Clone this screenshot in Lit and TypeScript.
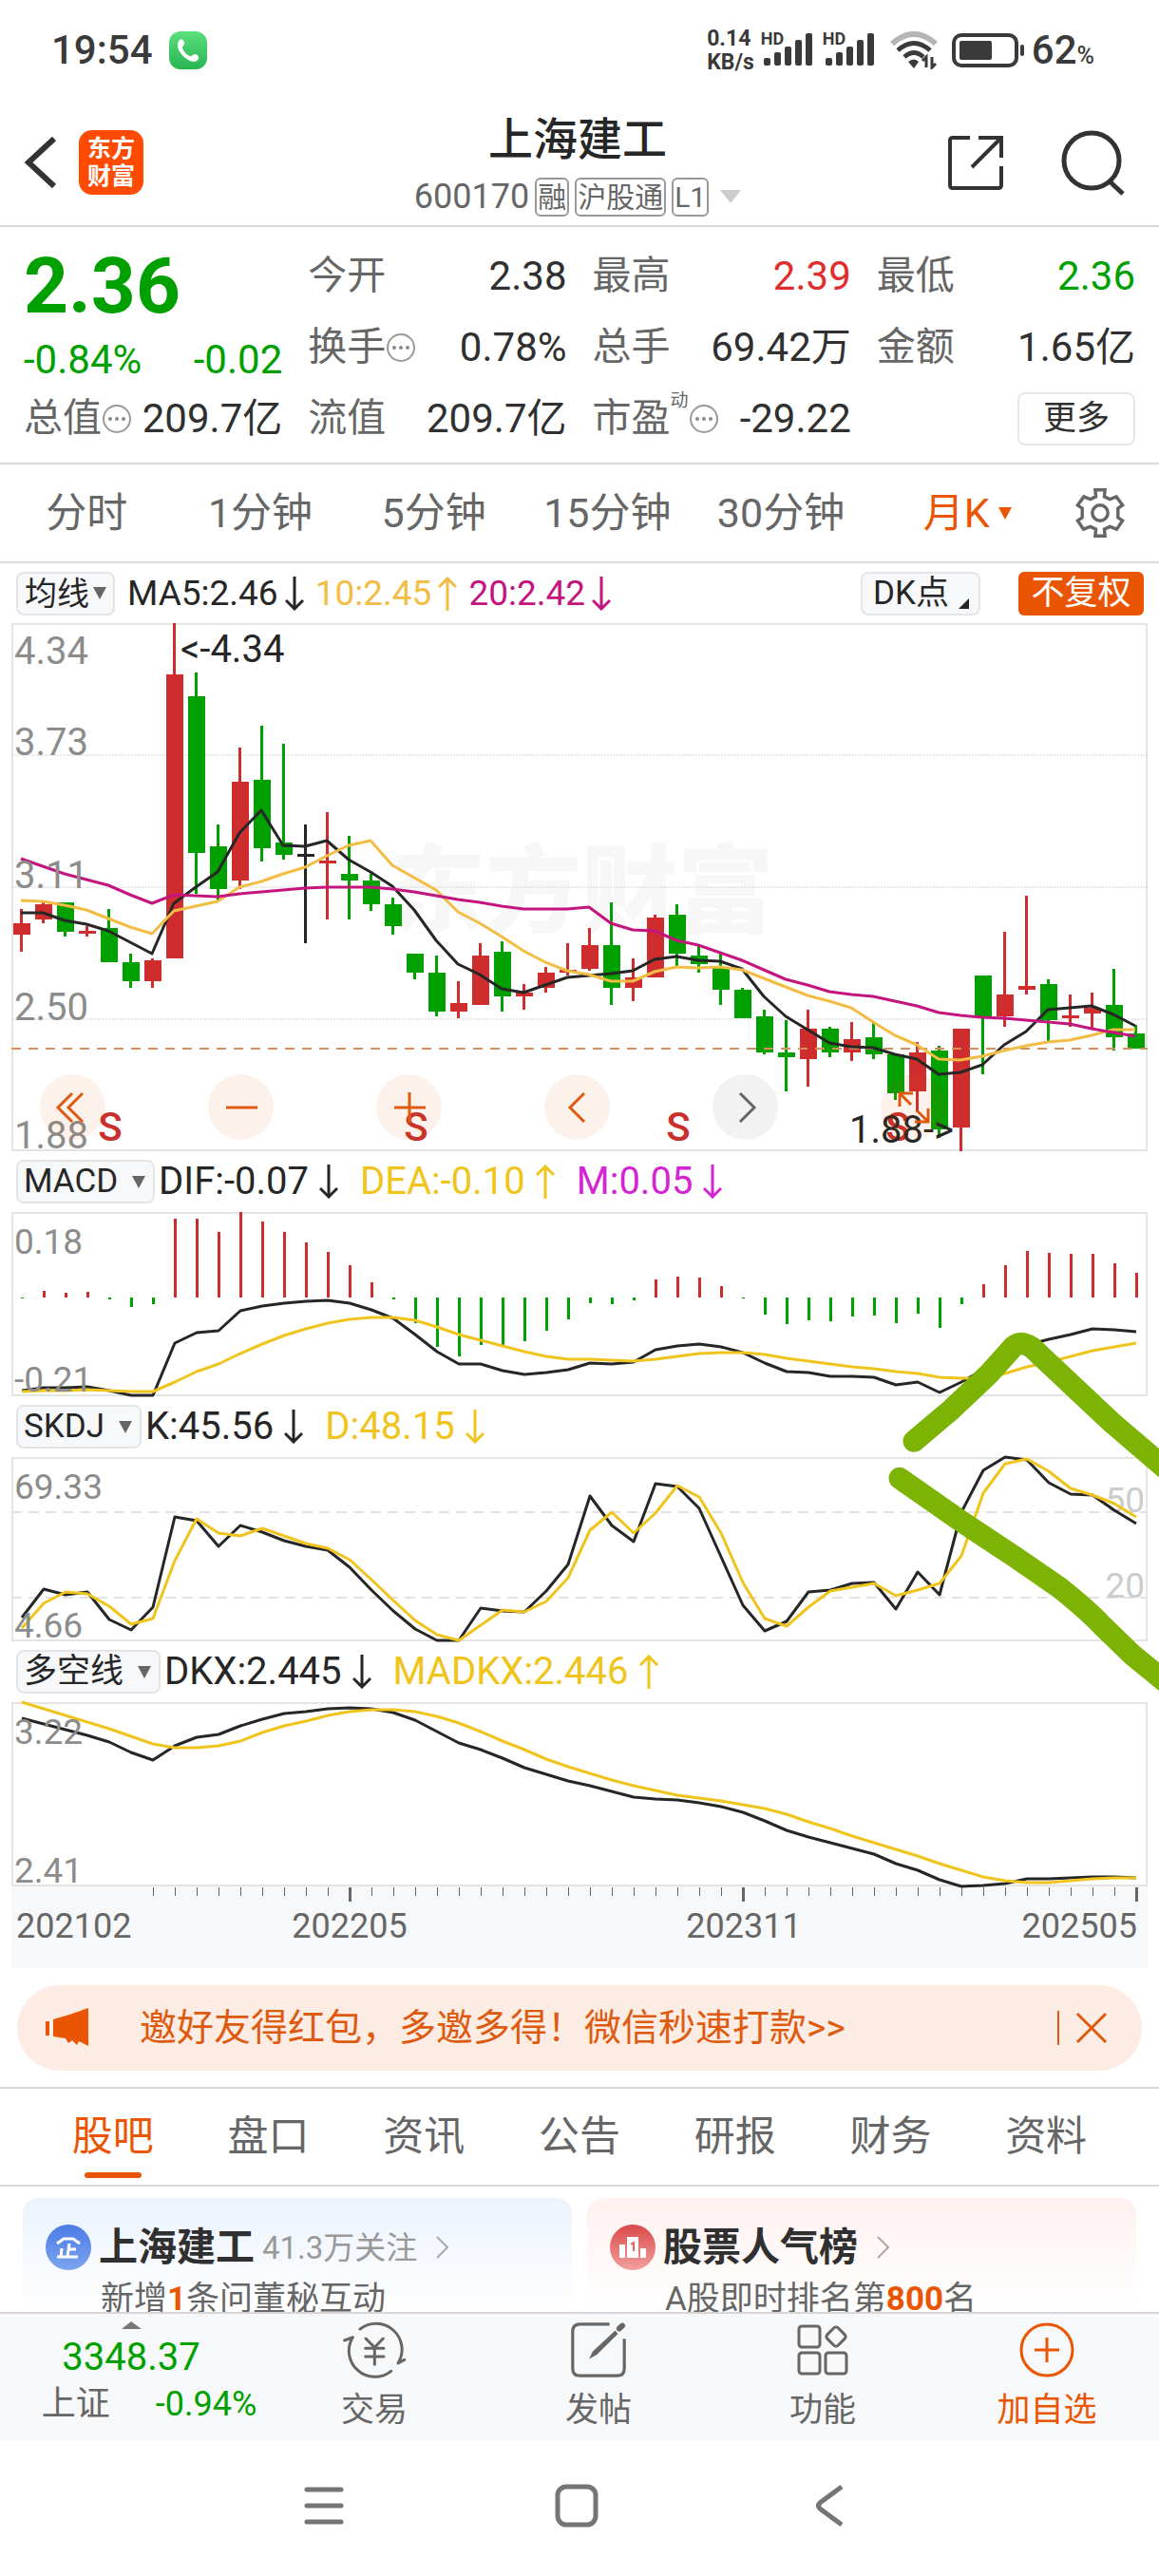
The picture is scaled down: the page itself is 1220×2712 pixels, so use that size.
import { LitElement, html, svg, css } from "lit";
import { customElement, property } from "lit/decorators.js";
import { classMap } from "lit/directives/class-map.js";

type Tone = "up" | "down" | "flat";
/** Monthly bar in fen: open-side top, high, body bottom, low. */
type Candle = [tone: Tone, high: number, top: number, bottom: number, low: number];

const CANDLES: Candle[] = [
  ["up", 301, 294, 289, 281], ["up", 304, 303, 296, 294], ["down", 304, 304, 290, 288],
  ["up", 293, 290, 290, 288], ["down", 301, 292, 276, 276], ["down", 280, 276, 267, 264],
  ["up", 278, 277, 267, 264], ["up", 434, 410, 278, 278], ["down", 411, 400, 327, 308],
  ["down", 340, 330, 310, 305], ["up", 376, 360, 314, 310], ["down", 386, 361, 329, 323],
  ["down", 378, 332, 326, 324], ["flat", 340, 326, 326, 285], ["up", 346, 323, 323, 296],
  ["down", 335, 317, 314, 296], ["down", 317, 314, 303, 300], ["down", 306, 303, 293, 289],
  ["down", 280, 280, 271, 268], ["down", 279, 271, 253, 251], ["up", 267, 257, 253, 250],
  ["up", 285, 279, 256, 256], ["down", 286, 281, 260, 253], ["up", 266, 262, 260, 254],
  ["up", 274, 271, 264, 262], ["up", 285, 272, 272, 270], ["up", 292, 284, 273, 272],
  ["down", 304, 284, 264, 256], ["up", 278, 269, 264, 258], ["up", 298, 297, 269, 269],
  ["down", 303, 298, 280, 274], ["down", 284, 279, 275, 271], ["down", 280, 274, 263, 256],
  ["down", 264, 263, 250, 250], ["down", 254, 251, 234, 233], ["down", 249, 234, 232, 216],
  ["up", 254, 245, 231, 218], ["down", 246, 245, 234, 232], ["up", 248, 240, 234, 230],
  ["down", 248, 241, 233, 231], ["down", 233, 233, 215, 212], ["up", 239, 234, 216, 206],
  ["down", 237, 235, 198, 194], ["up", 245, 245, 199, 188], ["down", 270, 270, 251, 224],
  ["up", 290, 261, 251, 246], ["up", 307, 265, 263, 261], ["down", 268, 266, 249, 239],
  ["up", 261, 251, 251, 246], ["up", 262, 255, 252, 245], ["down", 273, 256, 241, 235],
  ["down", 247, 243, 236, 236],
];

interface Line { color: string; points: number[]; }
/** Sampling range that a panel's series are recorded in. */
interface Range { top: number; bottom: number; }

const PRICE_RANGE: Range = { top: 42, bottom: 1520 };
const PRICE_LINES: Line[] = [
  { color: "#262626", points: [852, 853, 873, 886, 904, 936, 966, 825, 780, 739, 630, 566, 665, 666, 650, 705, 738, 778, 845, 930, 996, 1026, 1065, 1075, 1054, 1034, 1027, 1022, 1015, 984, 975, 986, 989, 1010, 1087, 1143, 1180, 1216, 1227, 1229, 1249, 1262, 1305, 1300, 1278, 1222, 1185, 1125, 1118, 1112, 1137, 1170] },
  { color: "#f3bd45", points: [818, 821, 831, 845, 868, 893, 910, 848, 834, 821, 782, 765, 744, 724, 694, 665, 651, 720, 755, 790, 851, 881, 920, 958, 990, 1016, 1026, 1043, 1044, 1018, 1004, 1007, 1005, 1013, 1036, 1060, 1083, 1101, 1119, 1159, 1197, 1222, 1261, 1264, 1254, 1237, 1224, 1215, 1209, 1195, 1180, 1179] },
  { color: "#c4157f", points: [700, 722, 744, 759, 777, 801, 825, 802, 806, 808, 800, 794, 788, 784, 782, 781, 781, 785, 793, 804, 816, 824, 833, 841, 843, 841, 838, 883, 900, 903, 929, 944, 964, 987, 1013, 1038, 1055, 1073, 1082, 1088, 1101, 1114, 1133, 1139, 1144, 1148, 1154, 1159, 1164, 1176, 1188, 1199] },
];

const MACD_RANGE: Range = { top: 185, bottom: 727 };
const MACD_ZERO = 437;
const MACD_BARS = [440, 417, 423, 420, 441, 464, 456, 204, 204, 244, 185, 213, 244, 274, 302, 342, 392, 441, 512, 582, 610, 577, 578, 566, 535, 501, 454, 457, 444, 384, 375, 378, 403, 440, 487, 515, 504, 507, 493, 490, 512, 484, 526, 456, 398, 342, 300, 305, 308, 308, 336, 364];
const MACD_LINES: Line[] = [
  { color: "#262626", points: [711, 703, 702, 699, 710, 725, 723, 571, 541, 534, 476, 462, 453, 448, 445, 454, 473, 497, 545, 597, 632, 632, 652, 664, 657, 649, 629, 632, 627, 591, 579, 574, 583, 599, 630, 654, 657, 668, 668, 672, 694, 686, 716, 685, 650, 612, 575, 560, 545, 528, 532, 538] },
  { color: "#efc41c", points: [714, 711, 709, 708, 709, 712, 714, 686, 655, 632, 602, 574, 548, 530, 513, 501, 495, 495, 504, 524, 546, 563, 579, 596, 610, 618, 619, 621, 624, 617, 610, 602, 599, 599, 604, 615, 624, 632, 639, 647, 655, 661, 671, 674, 673, 660, 641, 627, 609, 594, 582, 571] },
];

const SKDJ_RANGE: Range = { top: 907, bottom: 1450 };
const SKDJ_LINES: Line[] = [
  { color: "#262626", points: [1380, 1297, 1314, 1305, 1385, 1416, 1349, 1083, 1094, 1169, 1109, 1128, 1153, 1170, 1181, 1233, 1300, 1360, 1414, 1446, 1447, 1353, 1361, 1363, 1302, 1224, 1023, 1108, 1155, 986, 993, 1057, 1200, 1345, 1418, 1390, 1305, 1299, 1280, 1276, 1354, 1247, 1314, 1070, 946, 908, 916, 983, 1016, 1020, 1063, 1104] },
  { color: "#efc41c", points: [1410, 1338, 1305, 1309, 1347, 1399, 1383, 1213, 1089, 1131, 1139, 1117, 1139, 1162, 1177, 1208, 1267, 1330, 1389, 1431, 1446, 1402, 1358, 1362, 1332, 1263, 1122, 1068, 1132, 1071, 992, 1025, 1130, 1277, 1384, 1404, 1348, 1302, 1291, 1280, 1315, 1299, 1280, 1199, 1014, 927, 912, 949, 999, 1020, 1043, 1082] },
];

const DKX_RANGE: Range = { top: 186, bottom: 768 };
const DKX_LINES: Line[] = [
  { color: "#262626", points: [237, 255, 272, 290, 313, 344, 369, 325, 297, 287, 261, 240, 222, 216, 207, 204, 206, 218, 244, 280, 315, 336, 363, 393, 414, 435, 450, 468, 486, 491, 495, 505, 516, 533, 562, 592, 612, 630, 648, 666, 695, 717, 747, 767, 764, 760, 744, 744, 741, 738, 737, 740] },
  { color: "#efc41c", points: [187, 208, 229, 250, 271, 295, 317, 329, 330, 324, 309, 283, 261, 246, 228, 216, 210, 209, 216, 231, 251, 279, 309, 336, 366, 390, 412, 433, 450, 465, 480, 489, 497, 509, 521, 540, 563, 585, 609, 631, 652, 673, 697, 718, 739, 751, 757, 757, 751, 745, 741, 741] },
];

const WIDTH = 1196;
const STEP = 23;
const TONES: Record<Tone, string> = { up: "#cf2d2d", down: "#00a000", flat: "#262626" };

const scaleY = (range: Range, height: number) => (value: number) =>
  Math.round(((value - range.top) / (range.bottom - range.top)) * height);

const drawLines = (lines: Line[], range: Range, height: number, startX: number) => {
  const y = scaleY(range, height);
  return lines.map(
    (line) => svg`<polyline fill="none" stroke=${line.color} stroke-width="3" stroke-linejoin="round"
      points=${line.points.map((p, i) => `${startX + i * STEP},${y(p)}`).join(" ")}></polyline>`,
  );
};

const frame = (height: number) =>
  svg`<rect x="1" y="1" width=${WIDTH - 2} height=${height - 2} fill="none" stroke="#e4e4e4" stroke-width="2"></rect>`;

const chartText = css`
  :host { display: block; }
  svg { display: block; width: 100%; height: auto; overflow: visible; }
  text { font-family: Roboto, "Noto Sans CJK SC", sans-serif; }
  .scale { font-size: 40px; fill: #8c8c8c; }
  .scale-small { font-size: 37px; fill: #8c8c8c; }
  .level { font-size: 37px; fill: #cccccc; }
  .mark { font-size: 40px; fill: #262626; }
  .signal { font-size: 42px; font-weight: 500; fill: #c9302c; }
  .watermark { font-size: 101px; font-weight: 900; fill: #f7f7f7; }
  .date { font-size: 36px; fill: #666666; }
`;

@customElement("price-chart")
class PriceChart extends LitElement {
  static styles = chartText;

  render() {
    const height = 556;
    const y = (fen: number) => Math.round(((434 - fen) / 246) * height);
    return html`<svg viewBox="0 0 ${WIDTH} ${height}" role="img" aria-label="月K线图">
      <text class="watermark" x="398" y="318">东方财富</text>
      ${frame(height)}
      ${[139, 278, 417].map((gy) => svg`<line x1="0" x2=${WIDTH} y1=${gy} y2=${gy} stroke="#d4d4d4" stroke-width="1" stroke-dasharray="2 1"></line>`)}
      ${CANDLES.map(([tone, high, top, bottom, low], i) => {
        const x = 2 + i * STEP;
        const body = Math.max(3, y(bottom) - y(top));
        return svg`<g fill=${TONES[tone]}>
          <rect x=${x + 7} y=${y(high)} width="3" height=${y(low) - y(high)}></rect>
          <rect x=${x} y=${y(top) - (top === bottom ? 1 : 0)} width="18" height=${body}></rect>
        </g>`;
      })}
      <line x1="0" x2=${WIDTH} y1="448" y2="448" stroke="#d0905f" stroke-width="2" stroke-dasharray="10 8"></line>
      ${drawLines(PRICE_LINES, PRICE_RANGE, height, 10)}
      <text class="scale" x="3" y="43">4.34</text>
      <text class="scale" x="3" y="139">3.73</text>
      <text class="scale" x="3" y="279">3.11</text>
      <text class="scale" x="3" y="418">2.50</text>
      <text class="scale" x="3" y="553">1.88</text>
      <text class="mark" x="178" y="41">&lt;-4.34</text>
      ${[104, 426, 702, 933].map((x) => svg`<text class="signal" text-anchor="middle" x=${x} y="545">S</text>`)}
      <text class="mark" text-anchor="end" x="992" y="547">1.88-&gt;</text>
    </svg>`;
  }
}

@customElement("indicator-chart")
class IndicatorChart extends LitElement {
  static styles = chartText;
  @property() kind: "macd" | "skdj" | "dkx" = "macd";

  private content(height: number) {
    if (this.kind === "macd") {
      const y = scaleY(MACD_RANGE, height);
      const zero = y(MACD_ZERO);
      return svg`
        ${MACD_BARS.map((v, i) => {
          const end = y(v);
          return svg`<rect x=${10 + i * STEP} y=${Math.min(zero, end)} width="3" height=${Math.max(1, Math.abs(end - zero))}
            fill=${v < MACD_ZERO ? TONES.up : TONES.down}></rect>`;
        })}
        ${drawLines(MACD_LINES, MACD_RANGE, height, 11)}
        <text class="scale-small" x="3" y="44">0.18</text>
        <text class="scale-small" x="3" y="189">-0.21</text>`;
    }
    if (this.kind === "skdj") {
      return svg`
        ${[58, 148].map((gy) => svg`<line x1="0" x2=${WIDTH} y1=${gy} y2=${gy} stroke="#e2e2e2" stroke-width="2" stroke-dasharray="11 7"></line>`)}
        <text class="level" text-anchor="end" x="1193" y="58">50</text>
        <text class="level" text-anchor="end" x="1193" y="148">20</text>
        ${drawLines(SKDJ_LINES, SKDJ_RANGE, height, 11)}
        <text class="scale-small" x="3" y="44">69.33</text>
        <text class="scale-small" x="3" y="190">4.66</text>`;
    }
    return svg`
      ${drawLines(DKX_LINES, DKX_RANGE, height, 11)}
      <text class="scale-small" x="3" y="44">3.22</text>
      <text class="scale-small" x="3" y="190">2.41</text>`;
  }

  render() {
    const height = 194;
    return html`<svg viewBox="0 0 ${WIDTH} ${height}" role="img" aria-label=${this.kind}>
      ${frame(height)}${this.content(height)}
    </svg>`;
  }
}

@customElement("time-axis")
class TimeAxis extends LitElement {
  static styles = [chartText, css`:host { background: #f7f8fa; }`];

  render() {
    return html`<svg viewBox="0 0 ${WIDTH} 86" role="img" aria-label="日期">
      ${Array.from({ length: 46 }, (_, n) => {
        const i = n + 6;
        const major = i === 15 || i === 33 || i === 51;
        return svg`<rect x=${major ? 10 + i * STEP : 11 + i * STEP} y="1" width=${major ? 3 : 1} height=${major ? 15 : 9} fill="#666666"></rect>`;
      })}
      <text class="date" x="5" y="54">202102</text>
      <text class="date" x="356" y="54" text-anchor="middle">202205</text>
      <text class="date" x="771" y="54" text-anchor="middle">202311</text>
      <text class="date" x="1185" y="54" text-anchor="end">202505</text>
    </svg>`;
  }
}

interface Reading { text: string; dir: "up" | "down"; color: string; }

const arrow = (dir: "up" | "down") =>
  html`<svg class="arrow" viewBox="0 0 20 36" aria-hidden="true">
    <path d=${dir === "down" ? "M10 0V34M1 25L10 34L19 25" : "M10 36V2M1 11L10 2L19 11"} fill="none" stroke="currentColor" stroke-width="3"></path>
  </svg>`;

const caret = html`<svg class="caret" viewBox="0 0 14 13" preserveAspectRatio="none" aria-hidden="true"><path d="M0 0H14L7 13Z" fill="currentColor"></path></svg>`;

const dots = html`<svg class="dots" viewBox="0 0 32 32" aria-hidden="true">
  <circle cx="16" cy="16" r="14" fill="none" stroke="#999" stroke-width="2"></circle>
  <g fill="#888"><circle cx="9" cy="16" r="2"></circle><circle cx="16" cy="16" r="2"></circle><circle cx="23" cy="16" r="2"></circle></g>
</svg>`;

const chevron = html`<svg class="chevron" viewBox="0 0 14 24" aria-hidden="true"><path d="M1 1L12 12L1 23" fill="none" stroke="#aaa" stroke-width="2"></path></svg>`;

const signal = html`<span class="signal-block"><svg viewBox="0 0 56 38" class="signal" aria-hidden="true">
  <g fill="#3a3a3a"><rect x="3" y="27" width="7" height="8" rx="2"></rect><rect x="14" y="21" width="7" height="14" rx="2"></rect><rect x="25" y="15" width="7" height="20" rx="2"></rect><rect x="36" y="8" width="7" height="27" rx="2"></rect><rect x="47" y="1" width="7" height="34" rx="2"></rect></g>
</svg><span class="hd">HD</span></span>`;

@customElement("app-root")
class AppRoot extends LitElement {
  static styles = css`
    :host {
      display: block; background: #fff; color: #303030; overflow: hidden;
      font-family: Roboto, "Noto Sans CJK SC", sans-serif; font-size: 42px; line-height: 1;
    }
    * { box-sizing: border-box; }
    button, select, a { font: inherit; color: inherit; background: none; border: 0; padding: 0; margin: 0; text-decoration: none; }
    svg { display: block; flex: none; }
    .green { color: #00a000; }
    .red { color: #e02e2e; }
    .orange { color: #ea5504; }

    .status { display: flex; align-items: center; height: 105px; padding: 0 68px 0 54px; color: #3a3a3a; font-weight: 500; }
    .clock { margin-right: 17px; }
    .call { width: 40px; height: 40px; }
    .status-right { margin-left: auto; display: flex; align-items: center; }
    .speed { font-size: 23px; line-height: 25px; font-weight: 700; margin-right: 7px; }
    .speed div { white-space: nowrap; }
    .signal-block { position: relative; margin-right: 9px; }
    .signal { width: 56px; height: 38px; }
    .hd { position: absolute; left: 0; top: -2px; font-size: 18px; font-weight: 700; }
    .wifi { width: 50px; height: 40px; margin: 0 15px 0 6px; }
    .battery { width: 76px; height: 36px; margin-right: 8px; }
    .percent { display: flex; align-items: baseline; }
    .percent small { font-size: 25px; }

    .header { display: grid; grid-template-columns: 1fr auto 1fr; align-items: center; height: 134px; padding: 0 35px 0 25px; border-bottom: 2px solid #d9d9d9; }
    .header-left, .header-right { display: flex; align-items: center; }
    .header-right { justify-content: flex-end; gap: 61px; }
    .back-icon { width: 36px; height: 58px; margin-right: 22px; }
    .brand { width: 68px; height: 68px; border-radius: 14px; background: #ff4a00; color: #fff; font-size: 25px; line-height: 29px; font-weight: 700; text-align: center; padding-top: 5px; }
    .title { display: flex; flex-direction: column; align-items: center; padding: 8px 0 0 6px; }
    .title h1 { margin: 0; font-size: 47px; line-height: 64px; font-weight: 500; color: #262626; }
    .code { display: flex; align-items: center; gap: 6px; font-size: 36px; line-height: 56px; color: #666; }
    .tag { border: 2px solid #999; border-radius: 6px; font-size: 30px; line-height: 37px; padding: 0 1px; }
    .code .caret { width: 22px; height: 14px; color: #ccc; margin-left: 6px; }
    .share { width: 58px; height: 60px; }
    .search { width: 68px; height: 70px; }

    .quote { display: grid; grid-template-columns: repeat(4, 1fr); grid-template-rows: repeat(3, 75px); column-gap: 27px; padding: 14px 25px 9px; border-bottom: 2px solid #d9d9d9; }
    .last { grid-row: span 2; align-self: start; padding-top: 6px; }
    .price { font-size: 82px; line-height: 84px; font-weight: 700; }
    .change { display: flex; justify-content: space-between; line-height: 72px; }
    .stat { display: flex; align-items: center; }
    .stat dt { color: #666; display: flex; align-items: center; white-space: nowrap; font-size: 41px; }
    .stat dd { margin: 0 0 0 auto; white-space: nowrap; }
    .stat sup { font-size: 19px; line-height: 20px; align-self: flex-start; margin-top: -8px; }
    .dots { width: 32px; height: 32px; }
    .stat-more { justify-content: flex-end; }
    .more { width: 124px; height: 56px; border: 2px solid #e6e6e6; border-radius: 8px; font-size: 35px; }
    dl { margin: 0; }

    .periods { display: grid; grid-template-columns: repeat(6, 1fr) 124px; height: 104px; border-bottom: 2px solid #d9d9d9; color: #666; font-size: 43px; }
    .periods button { display: flex; align-items: center; justify-content: center; white-space: nowrap; }
    .periods .current { padding-left: 27px; gap: 9px; color: #ea5504; }
    .gear { width: 52px; height: 52px; }

    .charts { position: relative; padding: 0 12px; }
    .readings { display: flex; align-items: center; height: 64px; padding: 0 4px 0 5px; font-size: 40px; white-space: nowrap; }
    .readings.ma { height: 63px; font-size: 37px; }
    .pick { display: flex; align-items: center; height: 46px; padding: 0 8px 0 6px; border: 2px solid #e3e5e9; border-radius: 8px; background: #f7f8fa; font-size: 35px; margin-right: 4px; color: #262626; }
    .pick select { appearance: none; line-height: 42px; }
    .pick .caret { width: 14px; height: 13px; color: #666; margin-left: 14px; }
    .ma .pick { font-size: 34px; padding: 0 7px; margin-right: 13px; }
    .ma .pick .caret { margin-left: 4px; }
    .reading { display: flex; align-items: center; gap: 11px; margin-right: 23px; }
    .ma .reading { gap: 7px; margin-right: 12px; }
    .arrow { width: 20px; height: 36px; }
    .dk { margin-left: auto; display: flex; align-items: flex-end; width: 126px; height: 46px; border: 2px solid #e3e5e9; border-radius: 8px; background: #f7f8fa; color: #262626; font-size: 35px; line-height: 42px; padding-left: 11px; }
    .dk svg { width: 11px; height: 11px; margin: 0 0 5px 10px; }
    .adjust { width: 132px; height: 46px; margin-left: 40px; border-radius: 6px; background: #ea5504; color: #fff; font-size: 35px; }
    .price-panel { position: relative; }
    .controls { position: absolute; left: 30px; bottom: 12px; display: flex; gap: 108px; }
    .controls button { width: 69px; height: 69px; border-radius: 50%; background: rgba(234, 85, 4, 0.08); display: grid; place-items: center; color: #dd5a0e; }
    .controls .disabled { background: #f2f2f2; color: #666; }
    .controls svg { width: 38px; height: 38px; }
    .doodle { position: absolute; left: 0; top: 0; width: 100%; height: 100%; pointer-events: none; }

    .banner { display: flex; align-items: center; height: 90px; margin: 18px 18px 17px; padding: 0 36px 0 29px; border-radius: 45px; background: #fdece3; color: #dd5a0e; font-size: 39px; }
    .horn { width: 48px; height: 46px; margin-right: 52px; }
    .banner-close { margin-left: auto; display: flex; align-items: center; gap: 17px; }
    .banner-close i { width: 2px; height: 36px; background: #dd5a0e; }
    .banner-close svg { width: 34px; height: 34px; }

    .sections { display: grid; grid-template-columns: repeat(7, 1fr); height: 105px; padding: 0 37px; border-top: 2px solid #d9d9d9; border-bottom: 2px solid #d9d9d9; font-size: 43px; color: #666; }
    .sections button { position: relative; }
    .sections .current { color: #ea5504; }
    .sections .current::after { content: ""; position: absolute; left: calc(50% - 30px); bottom: 7px; width: 60px; height: 6px; border-radius: 3px; background: #ea5504; }

    .cards { display: grid; grid-template-columns: 1fr 1fr; gap: 16px; height: 132px; padding: 12px 24px 0; overflow: hidden; }
    .card { display: block; height: 180px; padding: 24px 24px 0; border-radius: 16px; background: linear-gradient(#ebf3fd, #fff 120px); }
    .card-hot { background: linear-gradient(#fff1f0, #fff 120px); }
    .card-head { display: flex; align-items: center; height: 56px; white-space: nowrap; }
    .card-head b { font-size: 41px; margin-left: 8px; font-weight: 700; }
    .card-head span { font-size: 33px; color: #999; margin-left: 8px; }
    .chevron { width: 14px; height: 24px; margin-left: 20px; }
    .card-icon { width: 48px; height: 48px; }
    .card-note { padding-left: 58px; font-size: 35px; line-height: 54px; color: #666; white-space: nowrap; }
    .card-note b { color: #ea5504; font-weight: 700; }

    .dock { display: grid; grid-template-columns: 276px repeat(4, 1fr); height: 135px; border-top: 2px solid #d4d6d9; background: #f7f8fa; color: #666; font-size: 35px; }
    .dock button { display: flex; flex-direction: column; align-items: center; padding-top: 8px; gap: 10px; line-height: 48px; }
    .dock .index { gap: 4px; }
    .dock .index svg { width: 21px; height: 8px; }
    .index-value { font-size: 40px; line-height: 40px; padding-top: 6px; }
    .index-row { display: flex; gap: 48px; padding-left: 38px; font-size: 36px; line-height: 50px; }
    .dock-icon { width: 68px; height: 60px; }

    .system { display: flex; justify-content: center; align-items: center; height: 143px; padding: 0 6px 5px 0; color: #757575; }
    .system button { width: 266px; display: grid; place-items: center; }
    .system svg { width: 46px; height: 46px; }
  `;

  private picker(name: string) {
    return html`<label class="pick"><select aria-label="指标"><option>${name}</option></select>${caret}</label>`;
  }

  private readings(name: string, items: Reading[]) {
    return html`<div class="readings">
      ${this.picker(name)}${items.map((r) => this.reading(r))}
    </div>`;
  }

  // Series colours come from the indicator data.
  private reading(r: Reading) {
    return html`<span class="reading" style="color:${r.color}">${r.text}${arrow(r.dir)}</span>`;
  }

  private stat(label: unknown, value: string, tone = "") {
    return html`<div class="stat"><dt>${label}</dt><dd class=${tone}>${value}</dd></div>`;
  }

  render() {
    const dark = "#262626";
    const gold = "#efc41c";
    return html`
      <div class="status">
        <span class="clock">19:54</span>
        <svg class="call" viewBox="0 0 40 40" aria-hidden="true">
          <defs><linearGradient id="call" x2="0" y2="1"><stop stop-color="#5be07c"></stop><stop offset="1" stop-color="#27b552"></stop></linearGradient></defs>
          <rect width="40" height="40" rx="12" fill="url(#call)"></rect>
          <path d="M11 9c3-2 5 1 5 4 0 2-3 3-2 5 2 4 5 7 8 8 2 1 3-2 5-2 3 0 5 3 4 5-3 5-9 3-14-1-6-5-11-13-6-19Z" fill="#fff"></path>
        </svg>
        <div class="status-right">
          <div class="speed"><div>0.14</div><div>KB/s</div></div>
          ${signal}${signal}
          <svg class="wifi" viewBox="0 0 50 40" aria-hidden="true">
            <path d="M2 13Q25-7 48 13" fill="none" stroke="#b5b5b5" stroke-width="6"></path>
            <path d="M8 20Q25 5 42 20M15 27Q25 18 35 27" fill="none" stroke="#3a3a3a" stroke-width="5"></path>
            <path d="M19 32Q25 27 30 32L25 39Z" fill="#3a3a3a"></path>
            <path d="M38 38V27L34 31M44 27V38L48 34" fill="none" stroke="#3a3a3a" stroke-width="3"></path>
          </svg>
          <svg class="battery" viewBox="0 0 76 36" aria-hidden="true">
            <rect x="2" y="2" width="66" height="32" rx="8" fill="none" stroke="#3a3a3a" stroke-width="4"></rect>
            <rect x="8" y="8" width="34" height="20" rx="2" fill="#3a3a3a"></rect>
            <rect x="72" y="12" width="4" height="12" rx="2" fill="#3a3a3a"></rect>
          </svg>
          <span class="percent">62<small>%</small></span>
        </div>
      </div>

      <header class="header">
        <div class="header-left">
          <button aria-label="返回"><svg class="back-icon" viewBox="0 0 36 58"><path d="M32 4L5 29L32 54" fill="none" stroke="#333" stroke-width="6"></path></svg></button>
          <a class="brand" href="#home">东方<br />财富</a>
        </div>
        <div class="title">
          <h1>上海建工</h1>
          <div class="code">600170<span class="tag">融</span><span class="tag">沪股通</span><span class="tag">L1</span>${caret}</div>
        </div>
        <div class="header-right">
          <button aria-label="分享"><svg class="share" viewBox="0 0 58 60" fill="none" stroke="#333" stroke-width="4">
            <path d="M23 4H5Q2 4 2 7V54Q2 57 5 57H53Q56 57 56 54V34M32 4H56V25M55 5L25 35"></path></svg></button>
          <button aria-label="搜索"><svg class="search" viewBox="0 0 68 70" fill="none" stroke="#333" stroke-width="5">
            <circle cx="32" cy="33" r="29"></circle><path d="M51 55L65 68"></path></svg></button>
        </div>
      </header>

      <dl class="quote">
        <div class="last green">
          <div class="price">2.36</div>
          <div class="change"><span>-0.84%</span><span>-0.02</span></div>
        </div>
        ${this.stat("今开", "2.38")}
        ${this.stat("最高", "2.39", "red")}
        ${this.stat("最低", "2.36", "green")}
        ${this.stat(html`换手${dots}`, "0.78%")}
        ${this.stat("总手", "69.42万")}
        ${this.stat("金额", "1.65亿")}
        ${this.stat(html`总值${dots}`, "209.7亿")}
        ${this.stat("流值", "209.7亿")}
        ${this.stat(html`市盈<sup>动</sup>${dots}`, "-29.22")}
        <div class="stat stat-more"><button class="more">更多</button></div>
      </dl>

      <nav class="periods">
        ${["分时", "1分钟", "5分钟", "15分钟", "30分钟"].map((t) => html`<button>${t}</button>`)}
        <button class="current">月K<svg width="14" height="13" viewBox="0 0 14 13"><path d="M0 0H14L7 13Z" fill="currentColor"></path></svg></button>
        <button aria-label="设置"><svg class="gear" viewBox="0 0 150 152" fill="none" stroke="#666" stroke-width="10">
          <path d="M60 5H90L88 26L105 34L125 26L144 52L130 62V90L144 100L126 126L105 118L88 126L90 147H60L62 126L45 118L24 126L6 100L20 90V62L6 52L25 26L45 34L62 26Z"></path>
          <circle cx="75" cy="76" r="24"></circle></svg></button>
      </nav>

      <section class="charts">
        <div class="readings ma">
          ${this.picker("均线")}
          ${this.reading({ text: "MA5:2.46", dir: "down", color: dark })}
          ${this.reading({ text: "10:2.45", dir: "up", color: "#f3bd45" })}
          ${this.reading({ text: "20:2.42", dir: "down", color: "#c4157f" })}
          <button class="dk">DK点<svg viewBox="0 0 11 11"><path d="M11 0V11H0Z" fill="#262626"></path></svg></button>
          <button class="adjust">不复权</button>
        </div>
        <div class="price-panel">
          <price-chart></price-chart>
          <div class="controls">
            <button aria-label="最早"><svg viewBox="0 0 38 38" fill="none" stroke="currentColor" stroke-width="3"><path d="M18 4L3 19L18 34M29 4L14 19L29 34"></path></svg></button>
            <button aria-label="缩小"><svg viewBox="0 0 38 38" fill="none" stroke="currentColor" stroke-width="3"><path d="M3 19H36"></path></svg></button>
            <button aria-label="放大"><svg viewBox="0 0 38 38" fill="none" stroke="currentColor" stroke-width="3"><path d="M3 19H36M19 3V35"></path></svg></button>
            <button aria-label="向左"><svg viewBox="0 0 38 38" fill="none" stroke="currentColor" stroke-width="3"><path d="M26 4L11 19L26 34"></path></svg></button>
            <button class="disabled" aria-label="向右"><svg viewBox="0 0 38 38" fill="none" stroke="currentColor" stroke-width="3"><path d="M13 4L28 19L13 34"></path></svg></button>
            <button aria-label="全屏"><svg viewBox="0 0 38 38" fill="none" stroke="currentColor" stroke-width="3"><path d="M4 18V4H18M4 4L16 16M34 20V34H20M34 34L22 22"></path></svg></button>
          </div>
        </div>
        ${this.readings("MACD", [
          { text: "DIF:-0.07", dir: "down", color: dark },
          { text: "DEA:-0.10", dir: "up", color: gold },
          { text: "M:0.05", dir: "down", color: "#d424d4" },
        ])}
        <indicator-chart kind="macd"></indicator-chart>
        ${this.readings("SKDJ", [
          { text: "K:45.56", dir: "down", color: dark },
          { text: "D:48.15", dir: "down", color: gold },
        ])}
        <indicator-chart kind="skdj"></indicator-chart>
        ${this.readings("多空线", [
          { text: "DKX:2.445", dir: "down", color: dark },
          { text: "MADKX:2.446", dir: "up", color: gold },
        ])}
        <indicator-chart kind="dkx"></indicator-chart>
        <time-axis></time-axis>
        <svg class="doodle" viewBox="0 0 1220 1480" preserveAspectRatio="none" fill="none" stroke="#7cb305" stroke-width="23" stroke-linecap="round" stroke-linejoin="round" aria-hidden="true">
          <path d="M962 925L1002 891L1040 855Q1052 842 1067 825Q1075 819 1086 826L1120 858L1170 905L1232 958"></path>
          <path d="M947 964L1010 1008L1070 1048L1115 1079Q1145 1103 1160 1119L1192 1150L1230 1181"></path>
        </svg>
      </section>

      <div class="banner">
        <svg class="horn" viewBox="0 0 48 46" fill="#ea5504" aria-hidden="true"><path d="M1 16H5V31H1ZM9 14L26 9L46 2V42L36 37L34 41L29 36L25 39L22 34L9 32Z"></path></svg>
        <a href="#invite">邀好友得红包，多邀多得！微信秒速打款&gt;&gt;</a>
        <button class="banner-close" aria-label="关闭"><i></i><svg viewBox="0 0 34 34" fill="none" stroke="currentColor" stroke-width="3"><path d="M2 2L32 32M32 2L2 32"></path></svg></button>
      </div>

      <nav class="sections">
        ${["股吧", "盘口", "资讯", "公告", "研报", "财务", "资料"].map(
          (t, i) => html`<button class=${classMap({ current: i === 0 })}>${t}</button>`,
        )}
      </nav>

      <div class="cards">
        <a class="card" href="#company">
          <div class="card-head">
            <svg class="card-icon" viewBox="0 0 48 48" aria-hidden="true">
              <defs><linearGradient id="blue" x2="0" y2="1"><stop stop-color="#4c7ce6"></stop><stop offset="1" stop-color="#7ca4ee"></stop></linearGradient></defs>
              <circle cx="24" cy="24" r="24" fill="url(#blue)"></circle>
              <path d="M12 20L19 15H29L36 20M25 20L23 34M25 26H32M17 25L16 34M12 34H34" fill="none" stroke="#fff" stroke-width="3"></path>
            </svg>
            <b>上海建工</b><span>41.3万关注</span>${chevron}
          </div>
          <div class="card-note">新增<b>1</b>条问董秘互动</div>
        </a>
        <a class="card card-hot" href="#ranking">
          <div class="card-head">
            <svg class="card-icon" viewBox="0 0 48 48" aria-hidden="true">
              <defs><linearGradient id="rose" x2="0" y2="1"><stop stop-color="#d94a4a"></stop><stop offset="1" stop-color="#f2a09c"></stop></linearGradient></defs>
              <circle cx="24" cy="24" r="24" fill="url(#rose)"></circle>
              <path d="M10 21H16V35H10ZM18 13H30V35H18ZM32 25H38V35H32Z" fill="#fff"></path>
              <path d="M22 21L25 19V28" fill="none" stroke="#dd6460" stroke-width="2"></path>
            </svg>
            <b>股票人气榜</b>${chevron}
          </div>
          <div class="card-note">A股即时排名第<b>800</b>名</div>
        </a>
      </div>

      <nav class="dock">
        <button class="index">
          <svg viewBox="0 0 21 8" aria-hidden="true"><path d="M10 0L21 8H0Z" fill="#777"></path></svg>
          <span class="index-value green">3348.37</span>
          <span class="index-row"><span>上证</span><span class="green">-0.94%</span></span>
        </button>
        <button>
          <svg class="dock-icon" viewBox="0 0 200 180" fill="none" stroke="#666" stroke-width="9" stroke-linecap="round" stroke-linejoin="round">
            <path d="M55 24A82 82 0 0 1 175 132L195 121M153 157A82 82 0 0 1 32 50L6 60"></path>
            <path d="M73 54L101 82L128 54M101 82V136M72 85H130M72 111H130"></path></svg>交易
        </button>
        <button>
          <svg class="dock-icon" viewBox="0 0 170 170" fill="none" stroke="#666" stroke-width="9">
            <path d="M118 8H30Q8 8 8 30V140Q8 162 30 162H140Q162 162 162 140V52"></path>
            <path d="M135 27L143 37L80 99L57 112L68 89Z" fill="#666" stroke="none"></path>
            <path d="M147 21L156 13" stroke-width="17" stroke-linecap="round"></path></svg>发帖
        </button>
        <button>
          <svg class="dock-icon" viewBox="-3 -3 60 60" fill="none" stroke="#666" stroke-width="3">
            <rect x="2" y="2" width="22" height="22" rx="3"></rect><rect x="2" y="30" width="22" height="22" rx="3"></rect>
            <rect x="30" y="30" width="22" height="22" rx="3"></rect>
            <rect x="33" y="5" width="16" height="16" rx="3" transform="rotate(45 41 13)"></rect></svg>功能
        </button>
        <button class="orange">
          <svg class="dock-icon" viewBox="0 0 60 60" fill="none" stroke="currentColor" stroke-width="3">
            <circle cx="30" cy="30" r="27"></circle><path d="M17 30H43M30 17V43"></path></svg>加自选
        </button>
      </nav>

      <div class="system">
        <button aria-label="最近任务"><svg viewBox="0 0 46 46" fill="none" stroke="currentColor" stroke-width="5" stroke-linecap="round"><path d="M5 6H41M5 23H41M5 40H41"></path></svg></button>
        <button aria-label="主屏幕"><svg viewBox="0 0 46 46" fill="none" stroke="currentColor" stroke-width="5"><rect x="3" y="3" width="40" height="40" rx="9"></rect></svg></button>
        <button aria-label="返回"><svg viewBox="0 0 46 46" fill="none" stroke="currentColor" stroke-width="5"><path d="M36 3L13 20Q10 23 13 26L36 43"></path></svg></button>
      </div>
    `;
  }
}
